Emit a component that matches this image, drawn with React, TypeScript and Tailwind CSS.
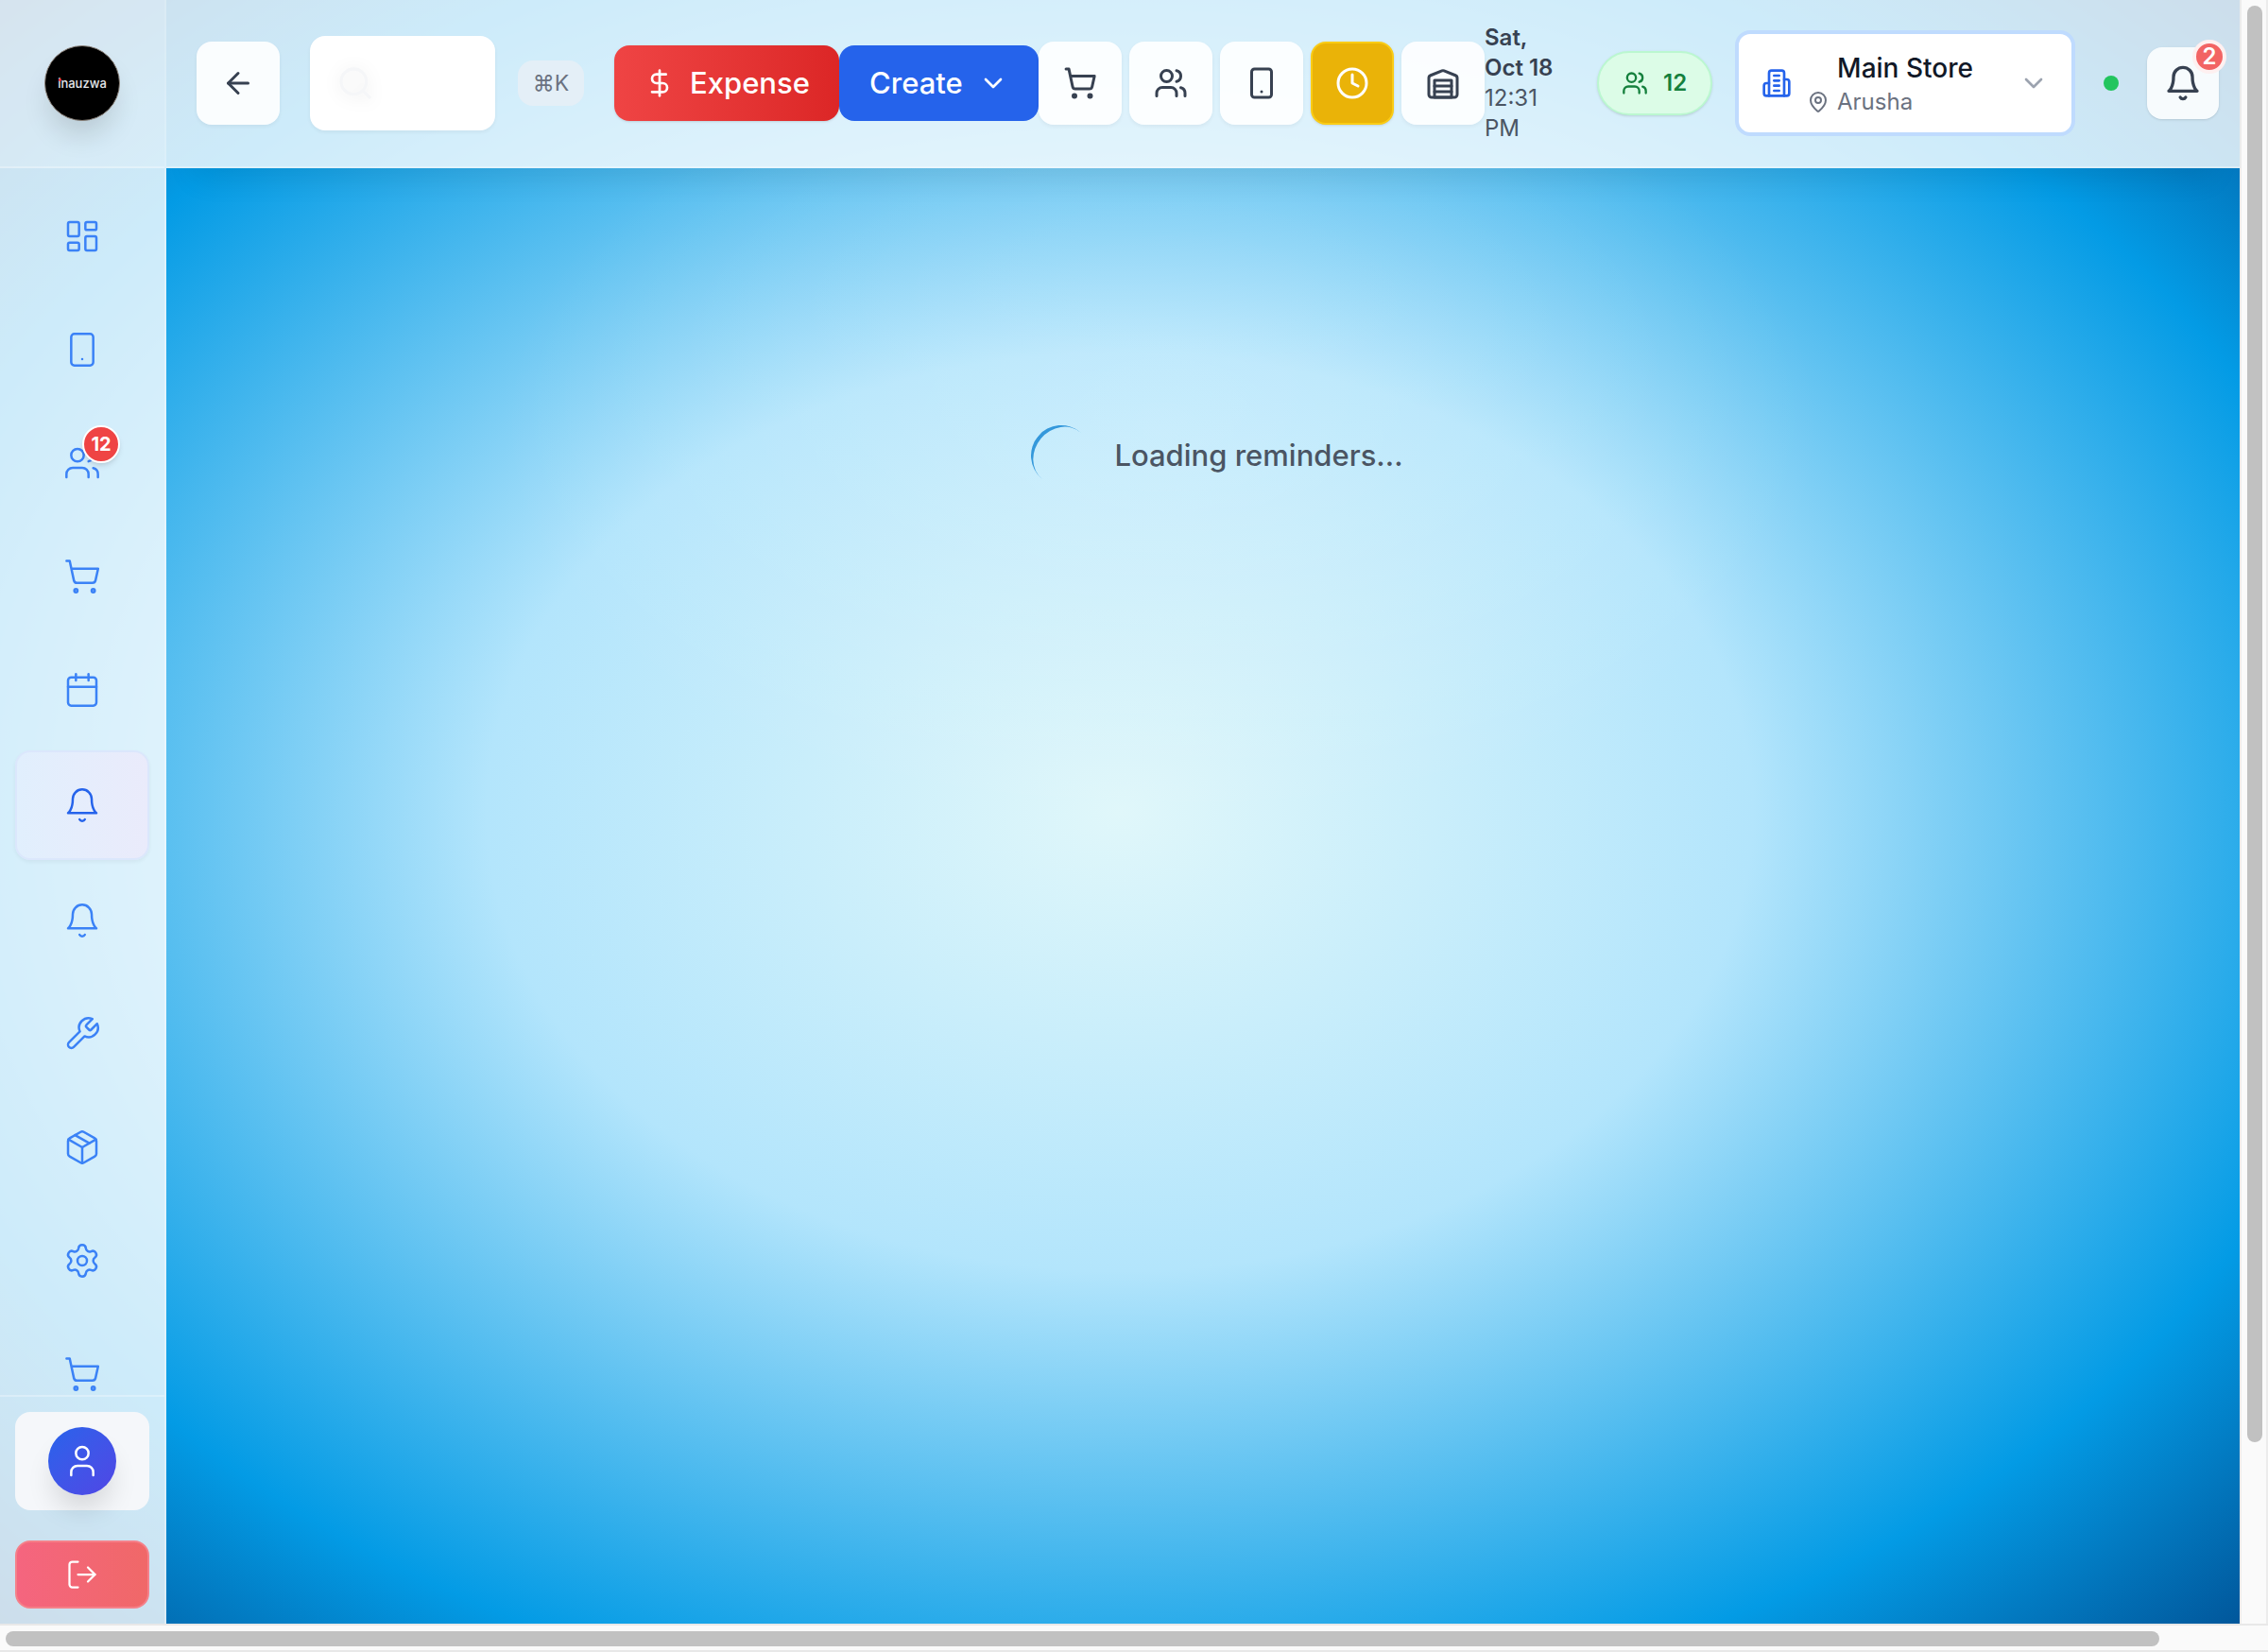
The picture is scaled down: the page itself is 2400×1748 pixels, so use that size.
import type { ReactNode } from "react";
import {
  ArrowLeft,
  Calendar,
  ChevronDown,
  Clock,
  DollarSign,
  LayoutDashboard,
  LogOut,
  MapPin,
  Package,
  Search,
  Settings,
  ShoppingCart,
  User,
} from "lucide-react";

type GlyphProps = { className?: string; strokeWidth?: number };

function Glyph({ className, strokeWidth = 2, children }: GlyphProps & { children: ReactNode }) {
  return (
    <svg
      viewBox="0 0 24 24"
      fill="none"
      stroke="currentColor"
      strokeWidth={strokeWidth}
      strokeLinecap="round"
      strokeLinejoin="round"
      className={className}
      aria-hidden="true"
    >
      {children}
    </svg>
  );
}

function BellIcon(props: GlyphProps) {
  return (
    <Glyph {...props}>
      <path d="M6 8a6 6 0 0 1 12 0c0 7 3 9 3 9H3s3-2 3-9" />
      <path d="M10.3 21a1.94 1.94 0 0 0 3.4 0" />
    </Glyph>
  );
}

function UsersIcon(props: GlyphProps) {
  return (
    <Glyph {...props}>
      <path d="M16 21v-2a4 4 0 0 0-4-4H6a4 4 0 0 0-4 4v2" />
      <circle cx="9" cy="7" r="4" />
      <path d="M22 21v-2a4 4 0 0 0-3-3.87" />
      <path d="M16 3.13a4 4 0 0 1 0 7.75" />
    </Glyph>
  );
}

function PhoneIcon(props: GlyphProps) {
  return (
    <Glyph {...props}>
      <rect width="14" height="20" x="5" y="2" rx="2" ry="2" />
      <path d="M12 18h.01" />
    </Glyph>
  );
}

function WrenchIcon(props: GlyphProps) {
  return (
    <Glyph {...props}>
      <path d="M14.7 6.3a1 1 0 0 0 0 1.4l1.6 1.6a1 1 0 0 0 1.4 0l3.77-3.77a6 6 0 0 1-7.94 7.94l-6.91 6.91a2.12 2.12 0 0 1-3-3l6.91-6.91a6 6 0 0 1 7.94-7.94l-3.76 3.76z" />
    </Glyph>
  );
}

function WarehouseIcon(props: GlyphProps) {
  return (
    <Glyph {...props}>
      <path d="M22 8.35V20a2 2 0 0 1-2 2H4a2 2 0 0 1-2-2V8.35A2 2 0 0 1 3.26 6.5l8-3.2a2 2 0 0 1 1.48 0l8 3.2A2 2 0 0 1 22 8.35Z" />
      <path d="M6 18h12" />
      <path d="M6 14h12" />
      <path d="M6 10h12v12H6z" />
    </Glyph>
  );
}

function BuildingIcon(props: GlyphProps) {
  return (
    <Glyph {...props}>
      <path d="M6 22V4a2 2 0 0 1 2-2h8a2 2 0 0 1 2 2v18Z" />
      <path d="M6 12H4a2 2 0 0 0-2 2v6a2 2 0 0 0 2 2h2" />
      <path d="M18 9h2a2 2 0 0 1 2 2v9a2 2 0 0 1-2 2h-2" />
      <path d="M10 6h4" />
      <path d="M10 10h4" />
      <path d="M10 14h4" />
      <path d="M10 18h4" />
    </Glyph>
  );
}

const navIcon = "size-10";
const navItems: { label: string; icon: ReactNode; active?: boolean; badge?: string }[] = [
  { label: "Dashboard", icon: <LayoutDashboard className={navIcon} strokeWidth={1.5} /> },
  { label: "Devices", icon: <PhoneIcon className={navIcon} strokeWidth={1.5} /> },
  { label: "Customers", icon: <UsersIcon className={navIcon} strokeWidth={1.5} />, badge: "12" },
  { label: "Sales", icon: <ShoppingCart className={navIcon} strokeWidth={1.5} /> },
  { label: "Appointments", icon: <Calendar className={navIcon} strokeWidth={1.5} /> },
  { label: "Reminders", icon: <BellIcon className={navIcon} strokeWidth={1.5} />, active: true },
  { label: "Notifications", icon: <BellIcon className={navIcon} strokeWidth={1.5} /> },
  { label: "Repairs", icon: <WrenchIcon className={navIcon} strokeWidth={1.5} /> },
  { label: "Inventory", icon: <Package className={navIcon} strokeWidth={1.5} /> },
  { label: "Settings", icon: <Settings className={navIcon} strokeWidth={1.5} /> },
  { label: "Purchases", icon: <ShoppingCart className={navIcon} strokeWidth={1.5} /> },
];

function Sidebar() {
  return (
    <aside className="flex w-44 shrink-0 flex-col border-r-2 border-white/30 bg-white/80">
      <div className="flex h-[178px] shrink-0 items-center justify-center border-b-2 border-white/30 bg-white/20">
        <div className="flex size-20 items-center justify-center rounded-full border border-[#8a8078] bg-black shadow-[0_20px_30px_-6px_rgba(0,0,0,0.14)]">
          <span className="relative text-[13px] font-medium leading-none text-gray-200">
            inauzwa
            <span className="absolute left-px top-px size-[3px] rounded-full bg-red-500" />
          </span>
        </div>
      </div>

      <nav className="flex flex-1 flex-col gap-2 px-4 pt-4">
        {navItems.map((item) => (
          <a
            key={item.label}
            href="#"
            aria-label={item.label}
            className={
              item.active
                ? "flex h-[116px] shrink-0 items-center justify-center rounded-2xl border-2 border-[#dbe7fc] bg-linear-to-r from-[#e1effd] to-[#eaebfb] text-[#2563eb] shadow-[0_2px_4px_rgba(0,0,0,0.05)]"
                : "flex h-28 shrink-0 items-center justify-center rounded-2xl text-[#3b82f6]"
            }
          >
            <span className="relative">
              {item.icon}
              {item.badge && (
                <span className="absolute -right-5 -top-5 flex size-10 items-center justify-center rounded-full border-2 border-white bg-[#ef4444] text-xl font-bold text-white shadow-md">
                  {item.badge}
                </span>
              )}
            </span>
          </a>
        ))}
      </nav>

      <div className="-mt-9 flex flex-col gap-8 border-t-2 border-white/30 p-4">
        <button
          aria-label="Account"
          className="flex h-[104px] items-center justify-center rounded-2xl bg-[#f5f7fa]"
        >
          <span className="flex size-[72px] items-center justify-center rounded-full bg-linear-to-br from-[#2563eb] to-[#4f46e5] text-white shadow-[0_20px_30px_-6px_rgba(0,0,0,0.14)]">
            <User className="size-10" strokeWidth={1.5} />
          </span>
        </button>
        <button
          aria-label="Log out"
          className="flex h-[72px] items-center justify-center rounded-2xl border-2 border-[#f58089] bg-linear-to-r from-[#f5657f] to-[#f06868] text-white"
        >
          <LogOut className="size-9" strokeWidth={1.5} />
        </button>
      </div>
    </aside>
  );
}

const tile =
  "flex size-[88px] shrink-0 items-center justify-center rounded-2xl bg-white/90 text-[#374151] shadow-[0_2px_4px_rgba(0,0,0,0.05)]";

function Header() {
  return (
    <header className="flex items-center border-b-2 border-white/30 bg-white/80 py-6 pl-8 pr-[22px] shadow-[0_40px_30px_-30px_rgba(0,0,0,0.09)]">
      <button aria-label="Back" className={tile}>
        <ArrowLeft className="size-9" />
      </button>

      <div className="relative ml-8 flex h-[100px] min-w-24 flex-1 items-center rounded-2xl bg-white shadow-[0_2px_4px_rgba(0,0,0,0.05)]">
        <Search
          className="absolute left-7 size-10 text-[#f5f6f8] drop-shadow-[0_2px_8px_rgba(0,0,0,0.1)]"
          strokeWidth={2}
        />
        <input
          type="search"
          aria-label="Search"
          className="h-full w-full rounded-2xl bg-transparent pl-20 pr-4 text-3xl outline-none"
        />
      </div>
      <kbd className="ml-6 flex h-12 w-[70px] shrink-0 items-center justify-center rounded-2xl bg-[#e4eff7] font-[Inter,'DejaVu_Sans',sans-serif] text-[23px] leading-8 text-[#6b7280]">
        ⌘K
      </kbd>

      <button className="ml-8 flex h-20 w-[238px] shrink-0 items-center gap-4 rounded-2xl bg-linear-to-r from-[#ef4444] to-[#dc2626] pl-8 text-[31px] font-medium text-white shadow-sm">
        <DollarSign className="size-8" />
        Expense
      </button>
      <button className="flex h-20 w-[211px] shrink-0 items-center justify-between rounded-2xl bg-[#2563eb] px-8 text-[31px] font-medium text-white">
        Create
        <ChevronDown className="size-8" />
      </button>

      <div className="flex shrink-0 gap-2">
        <button aria-label="Point of sale" className={tile}>
          <ShoppingCart className="size-9" />
        </button>
        <button aria-label="Customers" className={tile}>
          <UsersIcon className="size-9" />
        </button>
        <button aria-label="Devices" className={tile}>
          <PhoneIcon className="size-9" />
        </button>
        <button
          aria-label="Clock"
          className="flex size-[88px] shrink-0 items-center justify-center rounded-2xl border-2 border-[#facc15] bg-[#eab308] text-white shadow-sm"
        >
          <Clock className="size-9" />
        </button>
        <button aria-label="Warehouse" className={tile}>
          <WarehouseIcon className="size-9" />
        </button>
      </div>

      <div className="w-[119px] shrink-0 text-2xl">
        <p className="font-semibold leading-8 text-[#374151]">
          Sat,
          <br />
          Oct 18
        </p>
        <p className="leading-8 text-[#4b5563]">
          12:31
          <br />
          PM
        </p>
      </div>

      <div className="flex h-[68px] w-[122px] shrink-0 items-center gap-4 rounded-full border-2 border-[#bbf7d0] bg-[#dcfce7] pl-6 text-2xl font-semibold text-[#15803d] shadow-sm">
        <UsersIcon className="size-7" />
        12
      </div>

      <button className="ml-6 flex h-28 w-[360px] shrink-0 items-center gap-4 rounded-2xl border-4 border-[#bfdbfe] bg-white px-6">
        <BuildingIcon className="size-8 text-[#2563eb]" />
        <span className="flex-1">
          <span className="block text-[28px] font-medium leading-10 text-[#111827]">Main Store</span>
          <span className="flex items-center gap-2 text-2xl leading-8 text-[#6b7280]">
            <MapPin className="size-6" />
            Arusha
          </span>
        </span>
        <ChevronDown className="size-8 text-[#9ca3af]" />
      </button>

      <span className="ml-[30px] size-4 shrink-0 rounded-full bg-[#22c55e]" />

      <button
        aria-label="Notifications"
        className="relative ml-[30px] flex size-[76px] shrink-0 items-center justify-center rounded-2xl bg-white/85 text-[#374151] shadow-sm"
      >
        <BellIcon className="size-10" />
        <span className="absolute -right-2 -top-2 flex size-9 items-center justify-center rounded-full border-4 border-white/90 bg-[#f26464] text-2xl font-semibold leading-none text-white">
          2
        </span>
      </button>
    </header>
  );
}

export default function App() {
  return (
    <div className="flex min-h-screen flex-col bg-[#fafafa] font-[Inter,sans-serif]">
      <div className="flex flex-1">
        <div className="flex flex-1 bg-[radial-gradient(ellipse_at_center,#e0f7fa_0%,#b3e5fc_40%,#039be5_80%,#01579b_100%)]">
          <Sidebar />
          <div className="flex min-w-0 flex-1 flex-col">
            <Header />
            <main className="flex flex-1 justify-center bg-[radial-gradient(ellipse_700px_420px_at_48%_18%,rgba(255,255,255,0.22),rgba(255,255,255,0))] pl-[30px] pt-[272px]">
              <div role="status" className="flex h-16 items-center gap-6">
                <span className="size-16 rotate-[40deg] rounded-full border-l-4 border-[#3498db]" />
                <p className="text-[31px] font-medium text-[#4b5563]">Loading reminders...</p>
              </div>
            </main>
          </div>
        </div>
        <div aria-hidden="true" className="w-[30px] border-x-2 border-[#ececec] pt-1.5">
          <div className="ml-1.5 h-[1520px] w-4 rounded-full bg-[#c1c1c1]" />
        </div>
      </div>
      <div aria-hidden="true" className="h-[30px] border-y-2 border-[#e8e8e8] pl-1.5 pt-1.5">
        <div className="h-4 w-[2279px] rounded-full bg-[#c1c1c1]" />
      </div>
    </div>
  );
}
